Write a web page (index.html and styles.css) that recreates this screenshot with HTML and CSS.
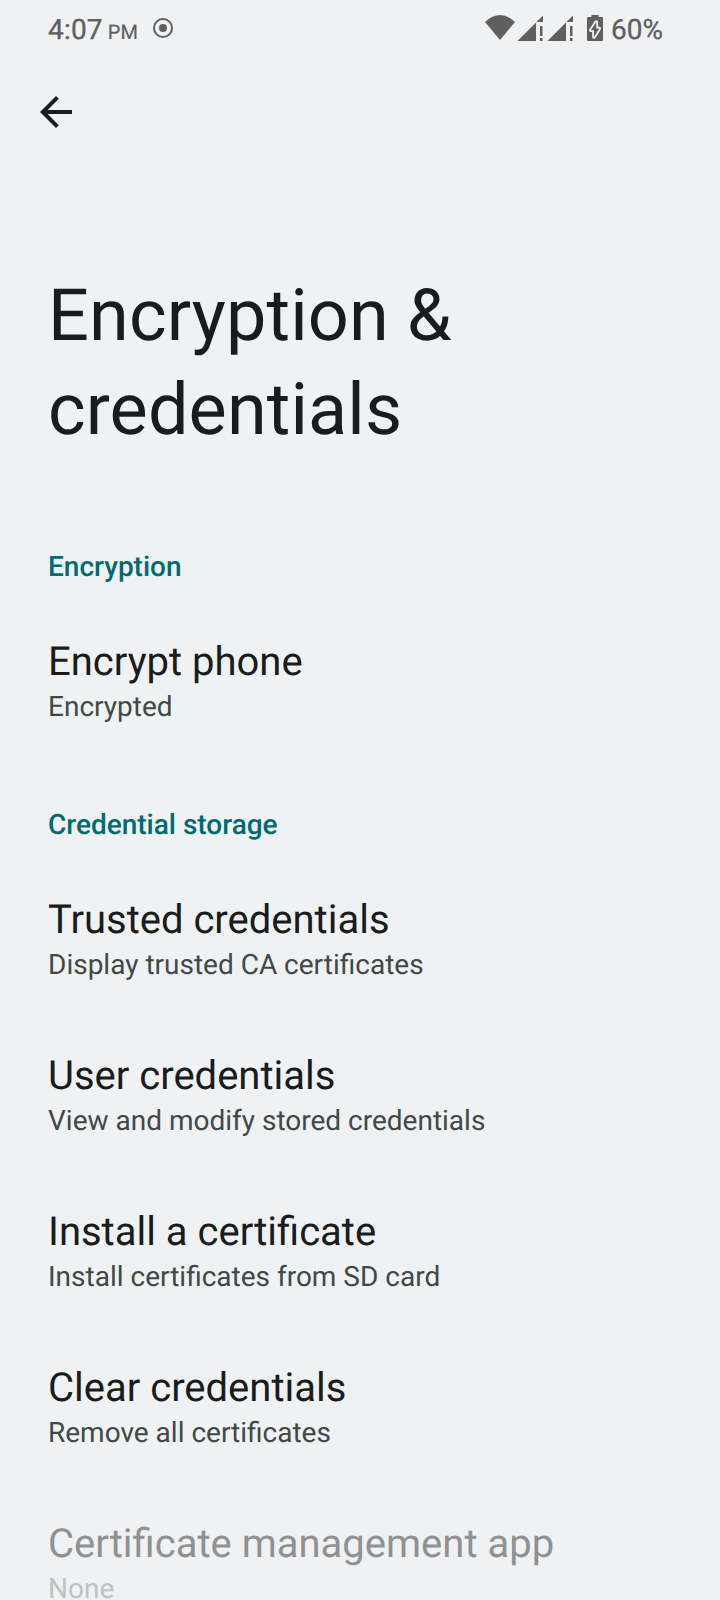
FILE: index.html
```html
<!DOCTYPE html>
<html lang="en">
<head>
<meta charset="utf-8">
<title>Encryption &amp; credentials</title>
<link rel="stylesheet" href="styles.css">
</head>
<body>
<div class="screen">
  <header class="status">
    <div class="status-left"><span class="time">4:07</span><span class="pm">PM</span>
      <svg class="record" width="20" height="20" viewBox="0 0 20 20"><circle cx="10" cy="10" r="9" fill="none" stroke="#5f5f5f" stroke-width="2"/><circle cx="10" cy="10" r="4" fill="#5f5f5f"/></svg>
    </div>
    <div class="status-right">
      <svg width="120" height="28" viewBox="484 14 120 28" fill="#5f5f5f">
        <path d="M485 22Q500 8 515 22L500 40Z"/>
        <path id="signal" d="M517.500 41L543 15.500V22H536V41ZM540 26h2.500v10h-2.500ZM540 38h2.500v3h-2.500Z"/>
        <use href="#signal" x="30"/>
        <path d="M588 17h3.500v-2h7v2h3.500q1 0 1 1v22q0 1-1 1h-14q-1 0-1-1v-22q0-1 1-1Z"/>
        <path d="M596.300 22L590.800 30.300H594V37L599.200 28.500H596.300Z" stroke="#eff1f3" stroke-width="3.600" stroke-linejoin="round" paint-order="stroke"/>
      </svg>
      <span class="battery">60%</span>
    </div>
  </header>
  <nav class="toolbar"><svg width="32" height="32" viewBox="4 4 16 16" fill="#1a1c1e"><path d="M20 11H7.830l5.590-5.590L12 4l-8 8 8 8 1.410-1.410L7.830 13H20z"/></svg></nav>
  <h1 class="title">Encryption &amp;<br>credentials</h1>
  <main>
    <h2 class="category">Encryption</h2>
    <section class="item"><div class="name">Encrypt phone</div><div class="summary">Encrypted</div></section>
    <h2 class="category">Credential storage</h2>
    <section class="item"><div class="name">Trusted credentials</div><div class="summary">Display trusted CA certificates</div></section>
    <section class="item"><div class="name">User credentials</div><div class="summary">View and modify stored credentials</div></section>
    <section class="item"><div class="name">Install a certificate</div><div class="summary">Install certificates from SD card</div></section>
    <section class="item"><div class="name">Clear credentials</div><div class="summary">Remove all certificates</div></section>
    <section class="item disabled"><div class="name">Certificate management app</div><div class="summary">None</div></section>
  </main>
</div>
</body>
</html>
```
FILE: styles.css
```css
* { box-sizing: border-box; }
body { margin: 0; background: #eff1f3; font-family: Roboto, sans-serif; color: #191c1d; text-rendering: geometricPrecision; }
.screen { height: 1600px; overflow: hidden; }
.status { height: 56px; padding: 0 57px 0 48px; display: flex; justify-content: space-between; align-items: center; color: #5f5f5f; }
.status-left, .status-right { display: flex; align-items: center; }
.time, .battery { font-size: 28px; margin-top: 2px; -webkit-text-stroke: 0.3px; }
.time { letter-spacing: 0.2px; }
.pm { font-size: 20px; margin: 8px 0 0 5px; -webkit-text-stroke: 0.2px; }
.record { margin-left: 15px; }
.battery { margin-left: 7px; }
.toolbar { height: 112px; padding: 40px; }
.title { margin: 101px 48px 0; font-size: 72px; line-height: 94px; font-weight: 400; letter-spacing: 0.1px; }
main { padding: 0 48px; }
.category { margin: 0; height: 71px; padding-top: 16px; font-size: 28px; line-height: 32px; font-weight: 500; color: #006a72; }
.title + main { margin-top: 78px; }
.item { height: 156px; padding-top: 32px; }
.item + .category { margin-top: 31px; }
.name { font-size: 40px; line-height: 47px; }
.summary { font-size: 28px; line-height: 33px; color: #3f4948; margin-top: 5px; }
.disabled .name { color: #8f9192; }
.disabled .summary { color: #bec3c4; }
```
